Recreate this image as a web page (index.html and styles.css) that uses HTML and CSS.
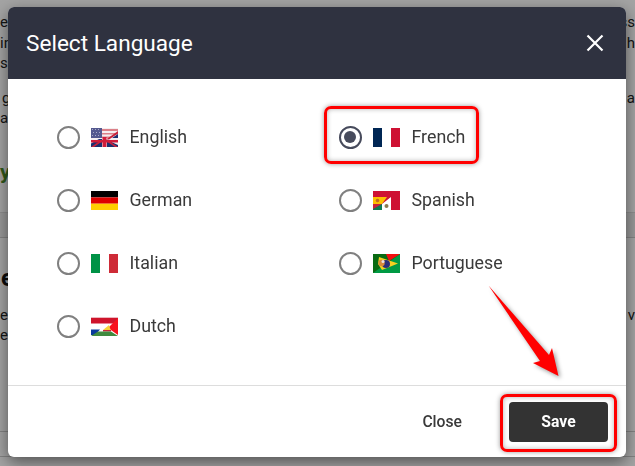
FILE: index.html
```html
<!DOCTYPE html>
<html lang="en">
<head>
    <meta charset="UTF-8">
    <meta name="viewport" content="width=device-width, initial-scale=1.0">
    <title>Select Language</title>
    <link rel="stylesheet" href="styles.css">
</head>
<body>
<div class="page">
    <div class="page-block top-block">
        <div class="page-line"><span>e</span><span>ss</span></div>
        <div class="page-line"><span>in</span><span>h</span></div>
        <div class="page-line"><span>s</span></div>
        <div class="page-line gap-line"><span class="nudge">g</span><span><i class="dot"></i> a</span></div>
        <div class="page-line"><span>a</span></div>
    </div>
    <div class="page-accent">y</div>
    <div class="page-band"></div>
    <div class="page-block">
        <div class="page-heading">e</div>
        <div class="page-line"><span>e</span><span>e v</span></div>
        <div class="page-line"><span>e</span></div>
    </div>
    <div class="page-foot"></div>
</div>

<div class="overlay">
    <div class="modal">
        <div class="modal-header">
            <h2>Select Language</h2>
            <button class="close-x" type="button" aria-label="Close">
                <svg width="18" height="18" viewBox="0 0 18 18"><path d="M1.5 1.5 16.5 16.5M16.5 1.5 1.5 16.5" stroke="#fff" stroke-width="2.2" fill="none"/></svg>
            </button>
        </div>
        <form class="modal-body">
            <label class="lang">
                <input type="radio" name="lang">
                <svg class="flag" viewBox="0 0 27 19">
                    <rect width="27" height="19" fill="#f4eef0"/>
                    <path d="M0 1h27v2H0zM0 5h27v1.500H0zM0 8.500h20v1.500H0z" fill="#dc8088"/>
                    <path d="M0 19v-3.500L8 11h3v8zM16 19v-7l11 5v2zM27 6v4h-6z" fill="#1c2f70"/>
                    <path d="M27 3 15 11.500h3L27 5.500zM0 19l8-5.500h3L3 19zM27 19l-9-6h-3l9 6z" fill="#c8213a"/>
                    <path d="M11.500 9h4v10h-4z" fill="#d01c3a"/>
                    <path d="M0 12h27v2.500H0z" fill="#d01c3a"/>
                    <rect width="11" height="10" fill="#54598f"/>
                    <path d="M1 1h1v1H1zM4 1h1v1H4zM7 1h1v1H7zM2 4h1v1H2zM5 4h1v1H5zM8 4h1v1H8zM1 7h1v1H1zM4 7h1v1H4zM7 7h1v1H7z" fill="#a9abc8"/>
                </svg>
                <span>English</span>
            </label>
            <label class="lang">
                <input type="radio" name="lang" checked>
                <svg class="flag" viewBox="0 0 27 19">
                    <rect width="9" height="19" fill="#002654"/>
                    <rect x="9" width="9" height="19" fill="#fff"/>
                    <rect x="18" width="9" height="19" fill="#ce1133"/>
                </svg>
                <span>French</span>
            </label>
            <label class="lang">
                <input type="radio" name="lang">
                <svg class="flag" viewBox="0 0 27 19">
                    <rect width="27" height="6.4" fill="#000"/>
                    <rect y="6.4" width="27" height="6.3" fill="#dd0000"/>
                    <rect y="12.7" width="27" height="6.3" fill="#ffce00"/>
                </svg>
                <span>German</span>
            </label>
            <label class="lang">
                <input type="radio" name="lang">
                <svg class="flag" viewBox="0 0 27 19">
                    <rect width="27" height="19" fill="#ce1133"/>
                    <path d="M0 6h14l-5 7H0z" fill="#fcc000"/>
                    <path d="M9 13 18 6v13H9z" fill="#fff"/>
                    <path d="M0 19v-6h9v6z" fill="#0f7a50"/>
                    <path d="M0 13h9L0 18z" fill="#c8213a"/>
                    <circle cx="4.500" cy="9.500" r="1.800" fill="#c46a20"/>
                    <circle cx="13.500" cy="15" r="2" fill="#8a7a50"/>
                </svg>
                <span>Spanish</span>
            </label>
            <label class="lang">
                <input type="radio" name="lang">
                <svg class="flag" viewBox="0 0 27 19">
                    <rect width="9" height="19" fill="#009246"/>
                    <rect x="9" width="9" height="19" fill="#fff"/>
                    <rect x="18" width="9" height="19" fill="#ce2b37"/>
                </svg>
                <span>Italian</span>
            </label>
            <label class="lang">
                <input type="radio" name="lang">
                <svg class="flag" viewBox="0 0 27 19">
                    <rect width="27" height="19" fill="#009a44"/>
                    <path d="M0 0h27L0 19z" fill="#0a6a12"/>
                    <path d="M13 0h14L16 7z" fill="#f20f0f"/>
                    <path d="M6 3 25 9.500 9 16 5 10z" fill="#f5d020"/>
                    <circle cx="13" cy="10" r="4" fill="#2b2f7a"/>
                    <circle cx="8.500" cy="9" r="3.200" fill="#d98a3a"/>
                    <circle cx="10" cy="7.500" r="1.500" fill="#e8e0e0"/>
                </svg>
                <span>Portuguese</span>
            </label>
            <label class="lang">
                <input type="radio" name="lang">
                <svg class="flag" viewBox="0 0 27 19">
                    <rect width="27" height="19" fill="#fff"/>
                    <rect width="27" height="1" fill="#eeb8c0"/>
                    <rect y="1" width="27" height="5.500" fill="#cf142b"/>
                    <path d="M0 12.500h9L4 18H0z" fill="#0a3a9c"/>
                    <path d="M27 1v17L17 11z" fill="#f8111d"/>
                    <path d="M12 13 18 8l2 6z" fill="#f7d43a"/>
                    <path d="M12 13h8v1.500h-8z" fill="#c9253a"/>
                    <path d="M0 19 7 14.500h13L27 19z" fill="#3f8a3f"/>
                </svg>
                <span>Dutch</span>
            </label>
        </form>
        <div class="modal-footer">
            <button class="btn-close" type="button">Close</button>
            <button class="btn-save" type="button">Save</button>
        </div>
    </div>
</div>

<!-- red annotations drawn on top of the screenshot -->
<div class="mark mark-french"></div>
<div class="mark mark-save"></div>
<svg class="arrow" width="635" height="466" viewBox="0 0 635 466">
    <path d="M488.500 285.500 549 355 552 348 558.500 376 533 363 540 361Z" fill="#ff0000"/>
</svg>
</body>
</html>
```

FILE: styles.css
```css
* {
    box-sizing: border-box;
}
html, body {
    margin: 0;
    height: 466px;
    overflow: hidden;
}
body {
    font-family: Roboto, "Liberation Sans", sans-serif;
    background-color: #fff;
    color: #333;
}

/* page behind the dialog */
.page {
    height: 466px;
    font-size: 15px;
    line-height: 20px;
    color: #222;
}
.top-block {
    padding-top: 12px;
}
.page-line {
    display: flex;
    justify-content: space-between;
    height: 20.500px;
}
.gap-line {
    margin-top: 14px;
}
.nudge {
    padding-left: 2px;
}
.dot {
    display: inline-block;
    width: 5px;
    height: 5px;
    border-radius: 50%;
    background-color: #1a6fb0;
}
.page-accent {
    margin-top: 29px;
    height: 28px;
    font-size: 21px;
    font-weight: 700;
    line-height: 28px;
    color: #4a8a2a;
}
.page-band {
    margin-top: 26px;
    height: 26px;
    background-color: #eee;
    border-top: 1px solid #ddd;
    border-bottom: 1px solid #ccc;
}
.page-heading {
    margin-top: 26px;
    margin-left: 1px;
    height: 41px;
    font-size: 24px;
    font-weight: 700;
    line-height: 28px;
    color: #111;
}
.page-foot {
    margin-top: 85px;
    height: 26px;
    border-top: 1px solid #ccc;
    border-bottom: 1px solid #ccc;
}

.overlay {
    position: fixed;
    top: 0;
    left: 0;
    width: 635px;
    height: 466px;
    padding: 7px 9px 9px 8px;
    background-color: rgba(0, 0, 0, 0.36);
}
.modal {
    display: flex;
    flex-direction: column;
    height: 450px;
    background-color: #fff;
    border-radius: 6px;
    overflow: hidden;
    box-shadow: 0 5px 16px rgba(0, 0, 0, 0.5);
}
.modal-header {
    display: flex;
    align-items: center;
    justify-content: space-between;
    height: 72px;
    padding: 0 22px 0 18px;
    background-color: #2f3240;
    color: #fff;
}
.modal-header h2 {
    margin: 0;
    font-size: 22.600px;
    font-weight: 400;
}
.close-x {
    display: flex;
    padding: 0;
    border: none;
    background: none;
}
.modal-body {
    display: grid;
    grid-template-columns: 282px 1fr;
    grid-auto-rows: 63px;
    flex: 1;
    padding: 27px 0 0 49px;
}
.lang {
    display: flex;
    align-items: center;
    font-size: 17.800px;
    color: #3a3a3a;
}
.lang span {
    margin-top: -2px;
}
.lang input {
    appearance: none;
    position: relative;
    width: 23px;
    height: 23px;
    margin: 0 11px 0 0;
    border: 2.500px solid #808080;
    border-radius: 50%;
    background-color: #fff;
}
.lang input:checked {
    border-color: #474b5c;
}
.lang input:checked::after {
    content: "";
    position: absolute;
    top: 3px;
    left: 3px;
    width: 12px;
    height: 12px;
    border-radius: 50%;
    background-color: #474b5c;
}
.flag {
    display: block;
    width: 27px;
    height: 19px;
    margin-right: 11.500px;
}
.modal-footer {
    display: flex;
    align-items: center;
    justify-content: flex-end;
    gap: 47px;
    height: 72px;
    padding: 0 18px 0 0;
    border-top: 1px solid #ddd;
}
.btn-close,
.btn-save {
    font-family: inherit;
    font-size: 15.700px;
    border: none;
    background: none;
    padding: 0;
}
.btn-close {
    font-weight: 500;
    color: #3a3a3a;
}
.btn-save {
    width: 99px;
    height: 40px;
    border-radius: 4px;
    font-weight: 700;
    background-color: #333;
    color: #fff;
}

.mark {
    position: fixed;
    border: 3px solid #ff0000;
    border-radius: 7px;
    box-shadow: 0 0 5px rgba(0, 0, 0, 0.4), inset 0 0 5px rgba(0, 0, 0, 0.3);
}
.mark-french {
    top: 106px;
    left: 324px;
    width: 155px;
    height: 58px;
}
.mark-save {
    top: 394px;
    left: 500px;
    width: 117px;
    height: 58px;
}
.arrow {
    position: fixed;
    top: 0;
    left: 0;
    filter: drop-shadow(2px 2px 2px rgba(0, 0, 0, 0.4));
}
```
